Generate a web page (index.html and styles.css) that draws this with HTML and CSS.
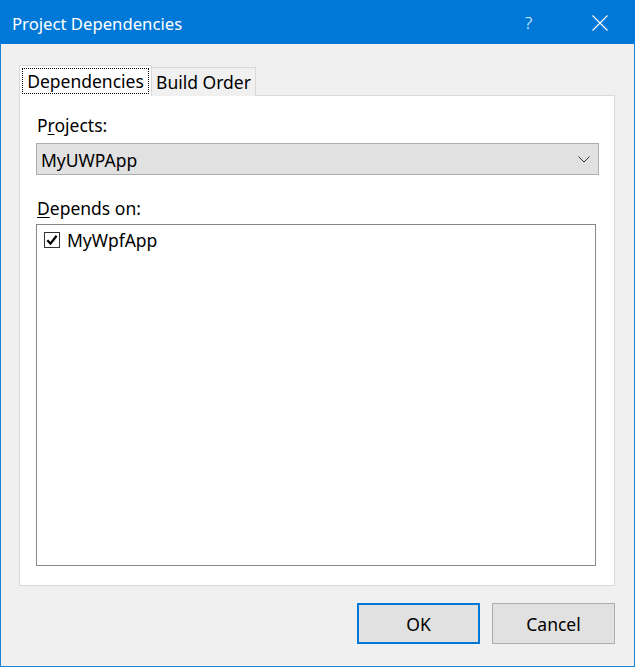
FILE: index.html
```html
<!DOCTYPE html>
<html>
<head>
<meta charset="utf-8">
<link rel="stylesheet" href="styles.css">
</head>
<body>
<div class="window">
  <div class="titlebar">
    <span class="title">Project Dependencies</span>
    <span class="help">?</span>
    <svg class="close" width="16" height="16" viewBox="0 0 16 16"><path d="M0.5 0.5L15.5 15.5M15.5 0.5L0.5 15.5" stroke="#fff" stroke-width="1.1" fill="none"/></svg>
  </div>
  <div class="client">
    <div class="tabs">
      <div class="tab active"><span class="focus">Dependencies</span></div>
      <div class="tab">Build Order</div>
    </div>
    <div class="panel">
      <div class="label">P<u>r</u>ojects:</div>
      <div class="combo">
        <span>MyUWPApp</span>
        <svg class="chev" width="12" height="7" viewBox="0 0 12 7"><path d="M0.5 0.5L6 6L11.5 0.5" stroke="#333" stroke-width="1" fill="none"/></svg>
      </div>
      <div class="label second"><u>D</u>epends on:</div>
      <div class="list">
        <div class="item">
          <span class="check"><svg width="14" height="14" viewBox="0 0 14 14"><path d="M2.3 7.2L5.5 10.6L11.6 2.8" stroke="#000" stroke-width="2.3" fill="none"/></svg></span>
          <span>MyWpfApp</span>
        </div>
      </div>
    </div>
    <div class="buttons">
      <div class="btn default">OK</div>
      <div class="btn">Cancel</div>
    </div>
  </div>
</div>
</body>
</html>
```
FILE: styles.css
```css
html, body {
  margin: 0;
  padding: 0;
}
body {
  font-family: "Noto Sans", "Open Sans", sans-serif;
  font-size: 17.5px;
  color: #000;
  background: #f0f0f0;
}
.window {
  width: 635px;
  height: 667px;
  box-sizing: border-box;
  border: 1px solid #1883d7;
  border-top: none;
  background: #f0f0f0;
  display: flex;
  flex-direction: column;
}
.titlebar {
  height: 44px;
  background: #0078d7;
  margin: 0 -1px;
  display: flex;
  align-items: center;
  color: #fff;
  position: relative;
}
.title {
  margin-left: 12px;
  font-size: 16.7px;
  margin-top: 3px;
}
.help {
  position: absolute;
  left: 525px;
  top: 11px;
  font-size: 17px;
  font-weight: 300;
}
.close {
  position: absolute;
  left: 592px;
  top: 15px;
}
.client {
  padding: 22px 18px 0 18px;
  display: flex;
  flex-direction: column;
}
.tabs {
  display: flex;
  align-items: flex-end;
  height: 30px;
  margin-bottom: -1px;
  position: relative;
  z-index: 1;
}
.tab {
  box-sizing: border-box;
  height: 29px;
  border: 1px solid #d9d9d9;
  border-bottom: none;
  background: #f0f0f0;
  padding: 0;
  line-height: 28px;
  width: 105px;
  text-align: center;
}
.tab.active {
  height: 31px;
  width: 133px;
  background: #fff;
  padding: 2px 2px 0 2px;
  line-height: 24px;
  margin-right: -1px;
}
.focus {
  display: block;
  border: 1px dotted #000;
  height: 26px;
  box-sizing: border-box;
  line-height: 24px;
}
.panel {
  box-sizing: border-box;
  width: 596px;
  height: 491px;
  background: #fff;
  border: 1px solid #d9d9d9;
  padding: 18px 0 0 16px;
  display: flex;
  flex-direction: column;
}
.label {
  height: 29px;
  line-height: 22px;
  padding-left: 1px;
}
.label u {
  text-decoration-thickness: 1px;
  text-underline-offset: 2px;
}
.label.second {
  margin-top: 21px;
  height: 28px;
  line-height: 24px;
}
.combo {
  box-sizing: border-box;
  width: 563px;
  height: 32px;
  background: #e1e1e1;
  border: 1px solid #adadad;
  display: flex;
  align-items: center;
  justify-content: space-between;
  padding: 1px 8px 0 4px;
}
.chev {
  margin-top: 0;
}
.list {
  box-sizing: border-box;
  width: 560px;
  height: 342px;
  border: 1px solid #828790;
  padding: 6px 0 0 7px;
}
.item {
  display: flex;
  align-items: center;
  height: 18px;
}
.check {
  box-sizing: border-box;
  width: 16px;
  height: 16px;
  border: 1px solid #333;
  background: #fff;
  display: flex;
  align-items: center;
  justify-content: center;
  margin-right: 7px;
}
.buttons {
  display: flex;
  justify-content: flex-end;
  gap: 12px;
  margin-top: 17px;
  margin-right: 1px;
}
.btn {
  box-sizing: border-box;
  width: 123px;
  height: 41px;
  background: #e1e1e1;
  border: 1px solid #adadad;
  display: flex;
  align-items: center;
  justify-content: center;
}
.btn.default {
  border: 2px solid #0078d7;
}
```
